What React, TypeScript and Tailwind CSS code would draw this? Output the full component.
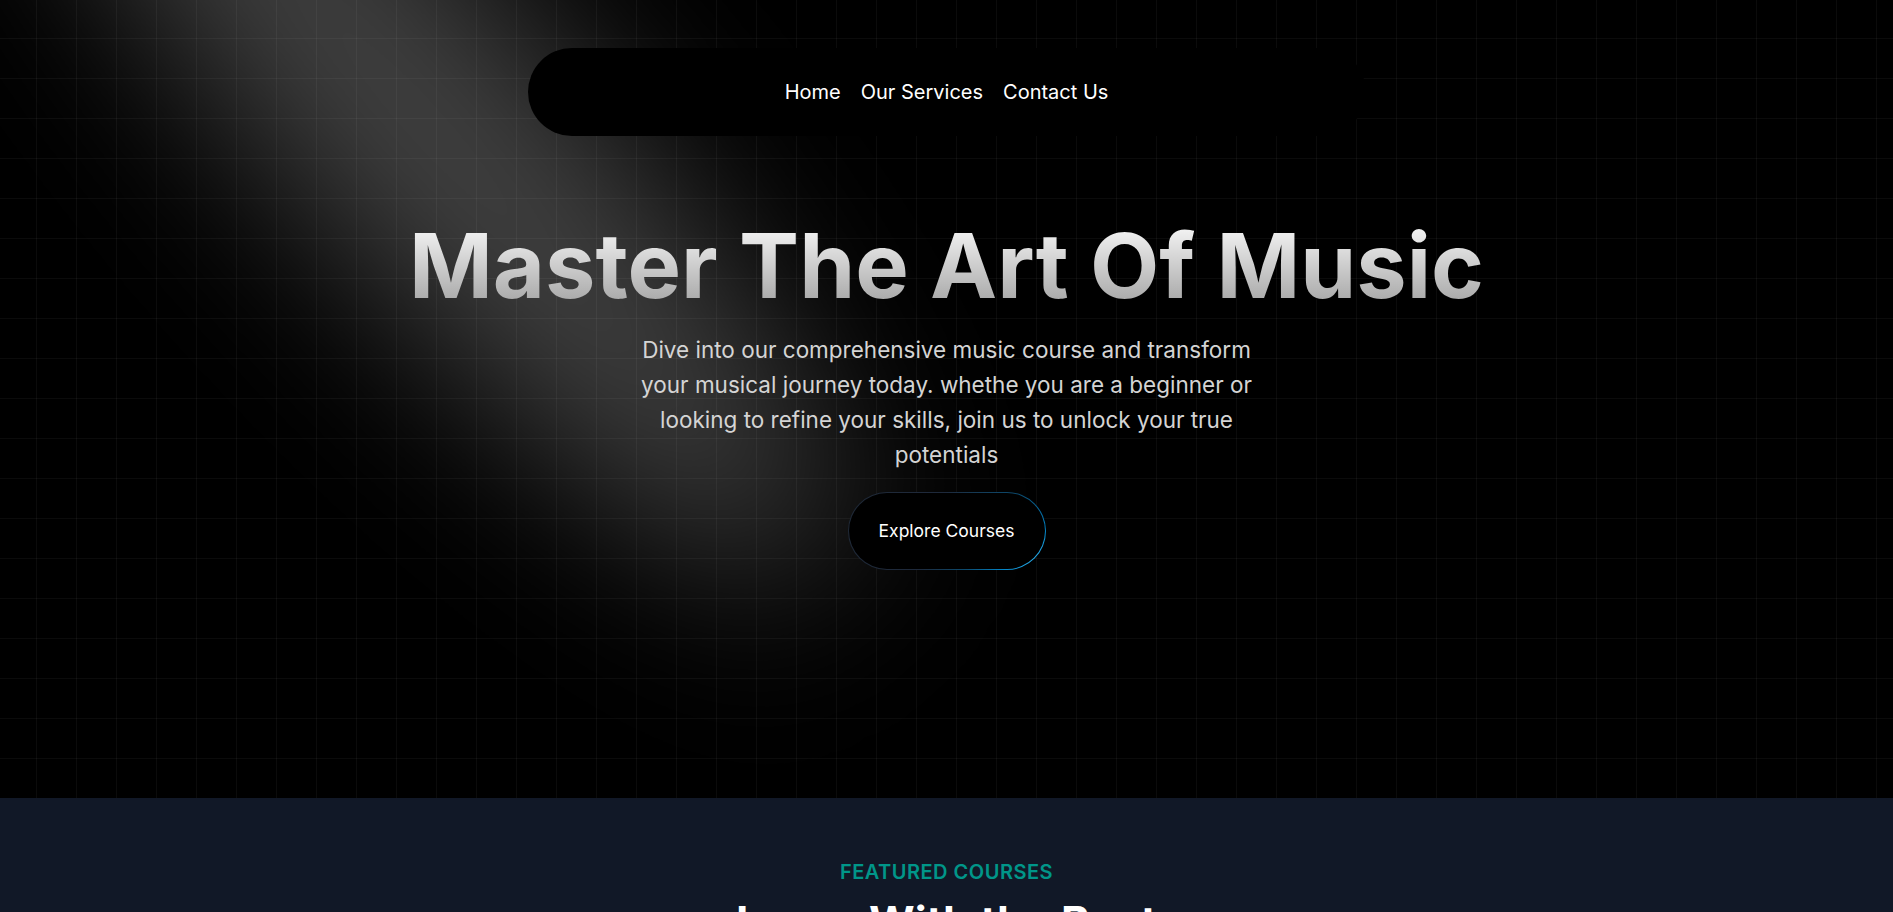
import React from "react";

const navLinks = [
    { name: "Home", href: "#" },
    { name: "Our Services", href: "#" },
    { name: "Contact Us", href: "#" },
];

const Spotlight = () => (
    <svg
        className="pointer-events-none absolute inset-0 h-full w-full"
        viewBox="0 0 1893 798"
        preserveAspectRatio="none"
        fill="none"
    >
        <defs>
            <filter
                id="spot-blur"
                filterUnits="userSpaceOnUse"
                x="-1500"
                y="-1500"
                width="4500"
                height="4000"
            >
                <feGaussianBlur stdDeviation="90" />
            </filter>
        </defs>
        <ellipse
            cx="425"
            cy="124"
            rx="600"
            ry="140"
            transform="rotate(48 425 124)"
            fill="white"
            fillOpacity="0.26"
            filter="url(#spot-blur)"
        />
    </svg>
);

const Navbar = () => (
    <nav className="relative z-10 mx-auto mt-12 flex h-[88px] w-[838px] items-center justify-center rounded-full bg-black">
        <div className="flex items-center gap-5">
            {navLinks.map((link) => (
                <a key={link.name} href={link.href} className="text-xl text-white">
                    {link.name}
                </a>
            ))}
        </div>
    </nav>
);

export default function App() {
    return (
        <div className="min-h-screen bg-[#111827] font-['Inter',sans-serif]">
            {/* Hero */}
            <section className="relative h-[798px] overflow-hidden bg-black bg-[linear-gradient(to_right,rgba(255,255,255,0.045)_1px,transparent_1px),linear-gradient(to_bottom,rgba(255,255,255,0.045)_1px,transparent_1px)] bg-[size:40px_40px] bg-[position:36px_38px]">
                <Spotlight />
                <Navbar />

                <div className="relative z-10 mt-[85px] flex flex-col items-center text-center">
                    <h1 className="bg-gradient-to-b from-neutral-50 to-neutral-400 bg-clip-text text-[90px] font-bold leading-none text-transparent">
                        Master The Art Of Music
                    </h1>
                    <p className="mt-[21px] max-w-[630px] text-[22.5px] leading-[35px] text-neutral-300">
                        Dive into our comprehensive music course and transform your musical journey today. whethe you are a beginner or looking to refine your skills, join us to unlock your true potentials
                    </p>

                    {/* Explore button */}
                    <a
                        href="#"
                        className="mt-5 rounded-full bg-[radial-gradient(circle_at_100%_100%,#38bdf8_0%,#0284c7_20%,#0c4a6e_38%,#1e293b_60%,#1f2937_100%)] p-px"
                    >
                        <span className="flex h-[76px] w-[196px] items-center justify-center rounded-full bg-black text-[17.5px] text-white">
                            Explore Courses
                        </span>
                    </a>
                </div>
            </section>

            {/* Featured courses */}
            <section className="flex flex-col items-center pt-[59px]">
                <p className="text-[20px] font-semibold uppercase tracking-wide text-teal-600">
                    Featured Courses
                </p>
                <h2 className="mt-2 text-[44px] font-bold leading-tight text-white">Learn With the Best</h2>
            </section>
        </div>
    );
}
